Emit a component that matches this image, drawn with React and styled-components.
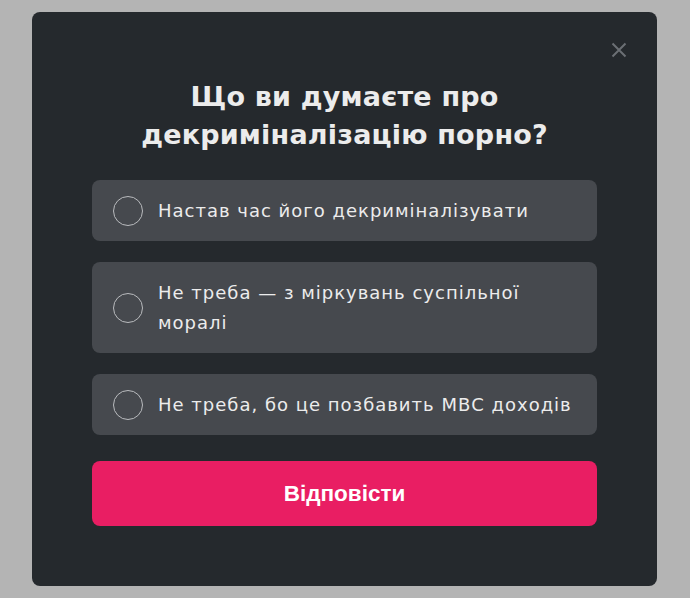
import React, { useState } from 'react';
import styled, { createGlobalStyle } from 'styled-components';

const GlobalStyle = createGlobalStyle`
    html, body {
        margin:0;
        padding:0;
        background:#b4b4b4;
    }
`;

const Overlay = styled.div`
    width:690px;
    height:598px;
    box-sizing:border-box;
    padding:12px 0 0 32px;
`;

const Modal = styled.div`
    position:relative;
    width:625px;
    height:574px;
    box-sizing:border-box;
    padding:66px 60px 0;
    background-color:#25292d;
    border-radius:8px;
    display:flex;
    flex-direction:column;
`;

const CloseButton = styled.button`
    position:absolute;
    top:28px;
    right:28px;
    width:20px;
    height:20px;
    padding:0;
    border:none;
    background:none;
    cursor:pointer;
    display:flex;
    align-items:center;
    justify-content:center;
`;

const Title = styled.h2`
    margin:0 0 26px;
    font-family: "DejaVu Sans", "Open Sans", sans-serif;
    font-size:27px;
    font-weight:bold;
    line-height:38px;
    letter-spacing:0.2px;
    text-align:center;
    color:#ececec;
`;

const Options = styled.div`
    display:flex;
    flex-direction:column;
    gap:21px;
`;

const Option = styled.label`
    display:flex;
    align-items:center;
    gap:15px;
    min-height:61px;
    box-sizing:border-box;
    padding:15.5px 20px 15.5px 21px;
    background-color:#46494e;
    border-radius:8px;
    cursor:pointer;
`;

const Radio = styled.span`
    flex:none;
    width:30px;
    height:30px;
    box-sizing:border-box;
    border-radius:50%;
    border:1px solid ${props => (props.checked ? '#e91e63' : '#b9bbbe')};
    box-shadow:${props => (props.checked ? 'inset 0 0 0 6px #46494e, inset 0 0 0 15px #e91e63' : 'none')};
`;

const OptionText = styled.span`
    font-family: "DejaVu Sans", "Open Sans", sans-serif;
    font-size:18px;
    line-height:30px;
    letter-spacing:1px;
    color:#ececec;
`;

const SubmitButton = styled.button`
    margin-top:26px;
    height:65px;
    border:none;
    border-radius:8px;
    background-color:#e91e63;
    color:#ffffff;
    font-family: "Liberation Sans", Arial, sans-serif;
    font-size:22.5px;
    font-weight:bold;
    cursor:pointer;
`;

const answers = [
    'Настав час його декриміналізувати',
    'Не треба — з міркувань суспільної моралі',
    'Не треба, бо це позбавить МВС доходів',
];

const App = () => {
    const [selected, setSelected] = useState(null);
    return (
        <>
            <GlobalStyle />
            <Overlay>
                <Modal>
                    <CloseButton aria-label="Закрити">
                        <svg width="16" height="16" viewBox="0 0 16 16">
                            <path d="M1.5 1.5 L14.5 14.5 M14.5 1.5 L1.5 14.5" stroke="#6b6f74" strokeWidth="2" />
                        </svg>
                    </CloseButton>
                    <Title>Що ви думаєте про<br />декриміналізацію порно?</Title>
                    <Options>
                        {answers.map((text, i) => (
                            <Option key={i} onClick={() => setSelected(i)}>
                                <Radio checked={selected === i} />
                                <OptionText>{text}</OptionText>
                            </Option>
                        ))}
                    </Options>
                    <SubmitButton>Відповісти</SubmitButton>
                </Modal>
            </Overlay>
        </>
    );
};

export default App;
